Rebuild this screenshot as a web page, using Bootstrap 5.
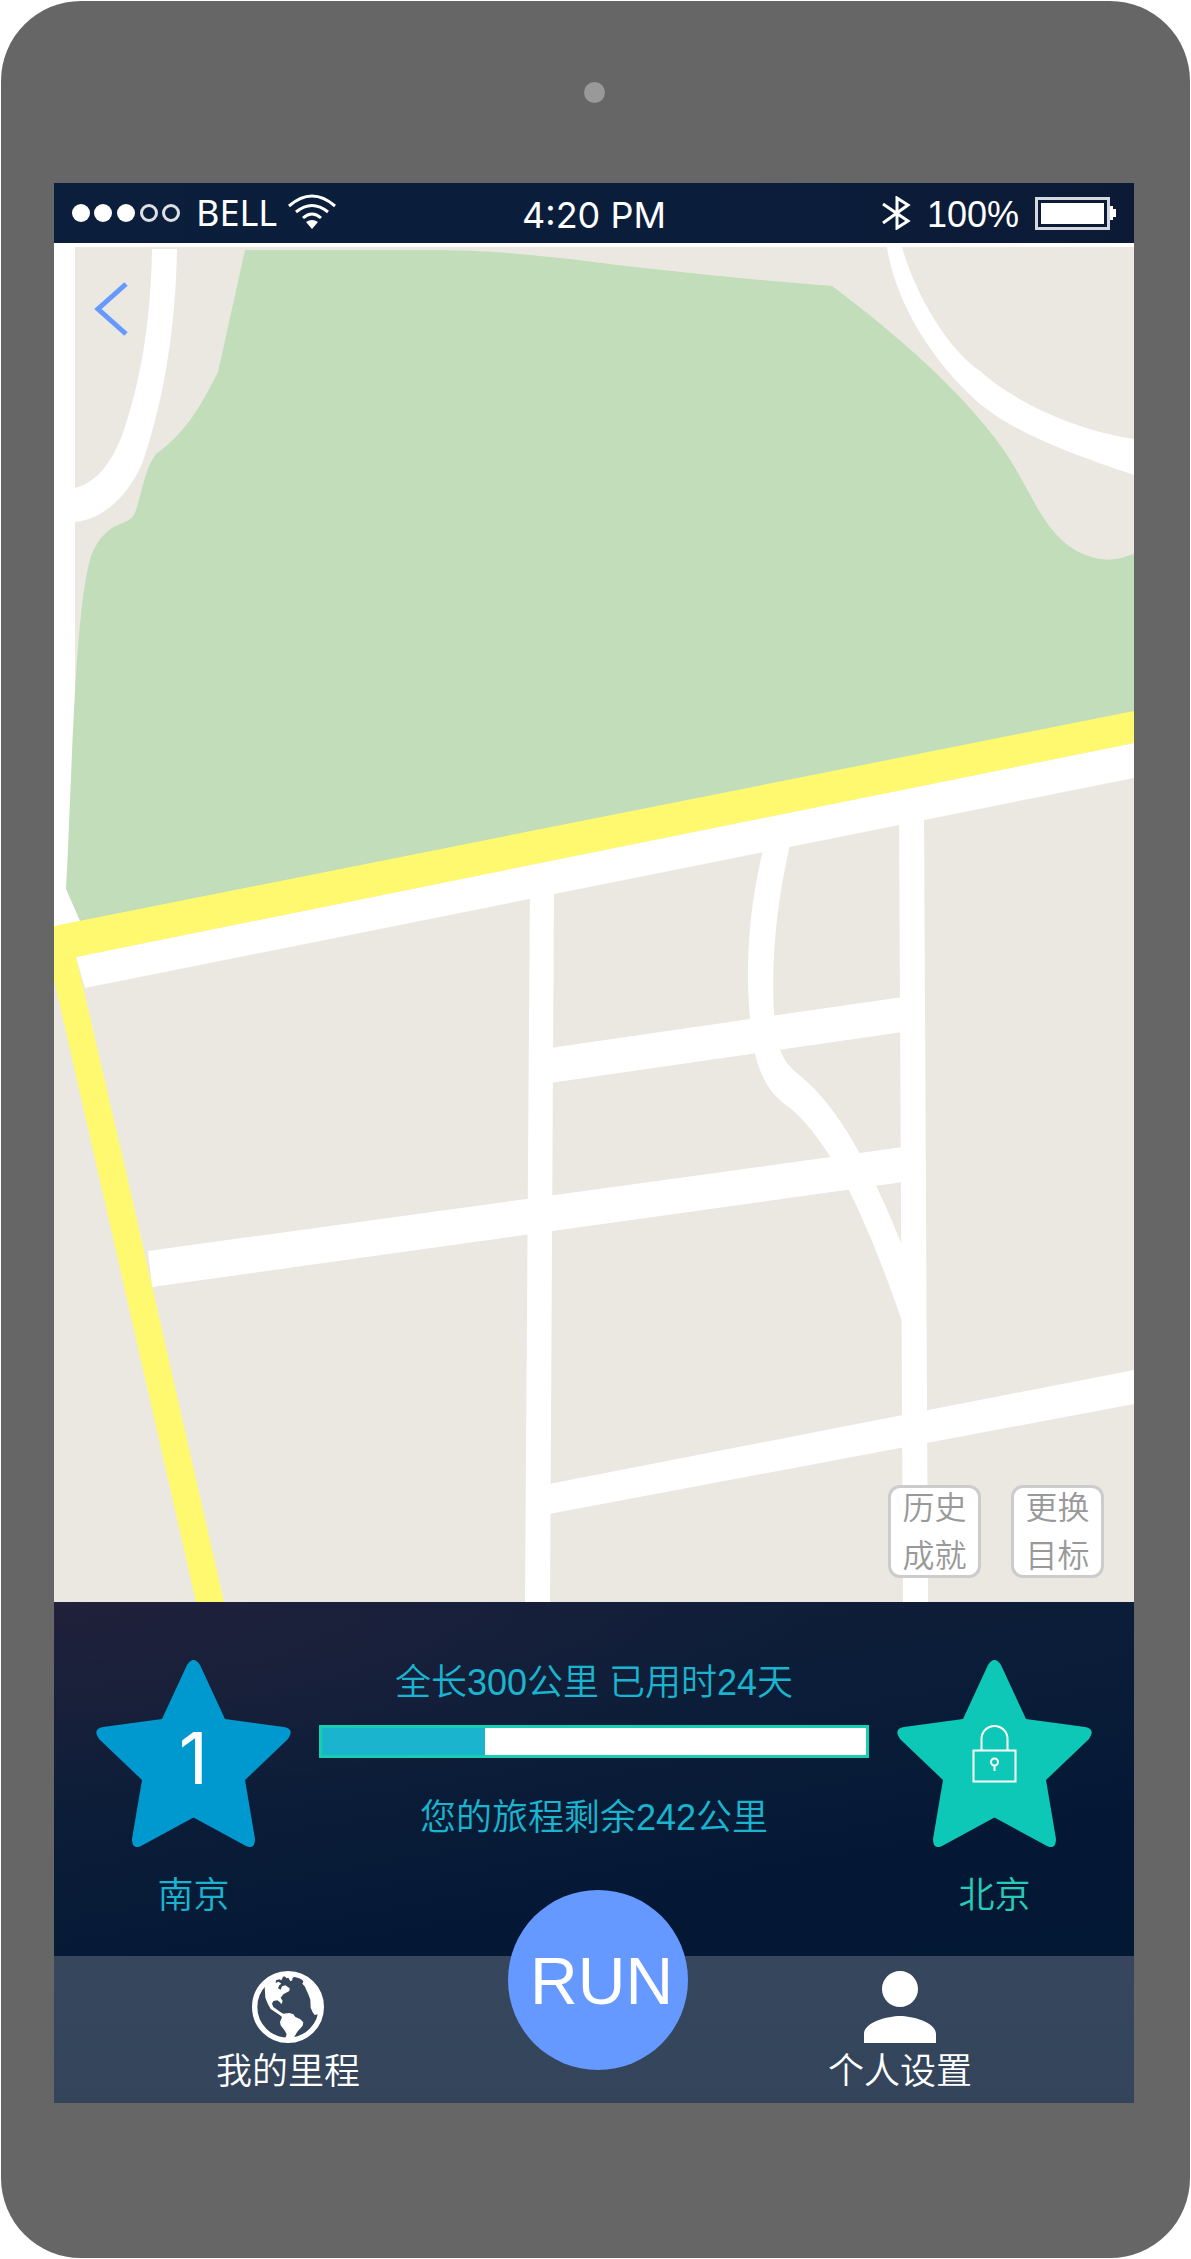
<!DOCTYPE html>
<html lang="zh-CN">
<head>
<meta charset="utf-8">
<meta name="viewport" content="width=device-width, initial-scale=1">
<title>RUN</title>
<link href="https://cdn.jsdelivr.net/npm/bootstrap@5.3.0/dist/css/bootstrap.min.css" rel="stylesheet">
<style>
  body { background: #fff; font-family: "Liberation Sans", "Noto Sans CJK SC", sans-serif; font-weight: 350; }
  .phone { margin: 1px; padding: 0 56px 155px 53px; background: #666; border-radius: 80px; }
  .phone-top { height: 182px; }
  .camera { width: 21px; height: 21px; background: #999; }
  .screen { background: #04193a; }
  .status { height: 60px; padding: 0 18px; background: linear-gradient(90deg, #0b1f3c, #0a1d3b 60%, #0c1a35); color: #fff; font-size: 36px; line-height: 56px; font-weight: 400; }
  .status-text { padding-top: 4px; }
  .carrier { font-family: "Noto Sans", sans-serif; }
  .clock { font-family: Inter, sans-serif; }
  .map-btn { width: 93px; height: 93px; padding: 0; border: 3px solid #ccc; border-radius: 12px; background: #fff; color: #999; font-size: 32px; line-height: 48px; font-weight: 350; }
  .map-tools { right: 30px; bottom: 24px; gap: 30px; }
  .back { left: 30px; top: 30px; padding: 8px; line-height: 0; }
  .trip { padding: 0 42px 33px; gap: 28px; background: radial-gradient(ellipse 70% 60% at 0 0, #20213b, rgba(32,33,59,0)), linear-gradient(170deg, #141f3a, #0b1d38 40%, #041835 75%, #031833); }
  .trip-text { color: #1ab4cf; font-size: 36px; line-height: 54px; }
  .trip-mid { padding-top: 54px; }
  .city { padding-top: 58px; width: 195px; }
  .city-name { margin-top: 22px; font-size: 36px; line-height: 54px; color: #1ab4cf; }
  .goal .city-name { color: #25cdb9; }
  .star-num { font-family: Inter, sans-serif; font-size: 72px; line-height: 72px; font-weight: 400; color: #fff; padding-top: 8px; }
  .trip-bar { height: 33px; margin: 15px 0 33px; border: 3px solid #16cfb2; border-radius: 0; background: #fff; }
  .trip-bar .progress-bar { background: #1ab4cf; }
  .tabs { padding: 15px 15% 4px; background: linear-gradient(#37465d, #34465c 60%, #34445b); }
  .tab-link { width: 144px; color: #fff; font-size: 36px; line-height: 54px; text-decoration: none; white-space: nowrap; }
  .tab-link svg { margin-bottom: 2px; }
  .run-btn { left: 42%; bottom: 33px; width: 180px; height: 180px; border: 0; padding: 2px 0 0 8px; background: #69f; color: #fff; font-size: 66px; line-height: 72px; font-weight: 400; }
</style>
<script src="https://cdn.jsdelivr.net/npm/bootstrap@5.3.0/dist/js/bootstrap.bundle.min.js"></script>
</head>
<body>
<div class="phone">
  <div class="phone-top d-flex align-items-center justify-content-center"><span class="camera rounded-circle"></span></div>
  <main class="screen">
    <header class="status d-flex align-items-center">
      <div class="d-flex align-items-center flex-fill w-25">
        <svg width="108" height="18" viewBox="0 0 108 18" aria-hidden="true">
          <g fill="#fff"><circle cx="9" cy="9" r="9"/><circle cx="31" cy="9" r="9"/><circle cx="54" cy="9" r="9"/></g>
          <g fill="none" stroke="#dde0e5" stroke-width="3"><circle cx="77" cy="9" r="7.500"/><circle cx="99" cy="9" r="7.500"/></g>
        </svg>
        <span class="carrier ms-3">BELL</span>
        <svg class="ms-2" width="52" height="38" viewBox="-3 0 52 38" fill="none" stroke="#fff" stroke-width="3" aria-hidden="true">
          <path d="M1 12Q24 -8 47 12"/><path d="M8 18Q24 5 40 18"/><path d="M15 24Q24 16 33 24"/><path d="M24 35l-6-7q6-4 12 0z" fill="#fff" stroke="none"/>
        </svg>
      </div>
      <div class="clock status-text">4:20 PM</div>
      <div class="d-flex align-items-center justify-content-end flex-fill w-25">
        <svg width="30" height="34" viewBox="0 0 30 34" fill="none" stroke="#fff" stroke-width="3" aria-hidden="true"><path d="M2 8L27 25 16 32V2L27 9 2 27"/></svg>
        <span class="status-text mx-3">100%</span>
        <svg width="81" height="33" viewBox="0 0 81 33" aria-hidden="true"><rect x="1.500" y="1.500" width="72" height="30" fill="none" stroke="#d5d8df" stroke-width="3"/><path d="M6 6h63v21H6zM75 9h3v3h3v8h-3v3h-3z" fill="#fff"/></svg>
      </div>
    </header>

    <section class="position-relative" aria-label="地图">
      <svg class="d-block w-100 h-auto" viewBox="54 243 1080 1359" aria-hidden="true">
        <path fill="#fff" d="M54 243h1080v1359H54z"/>
        <path fill="#ebe8e1" d="M75 247H1134V1602H54V940H75z"/>
        <path fill="#fff" d="M152 249H177C176 310 168 390 142 464C125 502 98 520 75 522V488C99 482 114 458 124 430C144 370 151 310 152 249z"/>
        <path fill="#fff" d="M887 247H902C914 290 945 347 980 371C1018 405 1080 431 1134 439V475C1090 460 1022 438 980 404C930 360 895 300 887 247z"/>
        <path fill="#c1ddba" d="M245 250H440C500 251 530 255 570 259C620 266 760 281 832 286C878 320 958 385 1003 449C1035 495 1045 545 1095 558C1110 562 1122 558 1134 554V720L80 930L66 889L68 850C74 700 78 600 91 556C96 545 98 540 107 532C117 522 130 524 135 513C142 494 144 470 156 454C185 433 200 408 218 372z"/>
        <path fill="#fff" d="M54 880L66 889L80 921L54 930z"/>
        <g fill="#fff">
          <path d="M76 957L1134 743V778L85 988z"/>
          <path d="M530 880H554L550 1602H525z"/>
          <path d="M899 810H924L928 1602H903z"/>
          <path d="M550 1048L903 997V1032L550 1083z"/>
          <path d="M148 1251L903 1147V1182L152 1287z"/>
          <path d="M549 1484L1134 1370V1404L549 1514z"/>
          <path d="M764 845C752 896 744 950 750 1019C754 1062 762 1087 786 1105C830 1138 866 1217 902 1321L904 1250C872 1170 840 1107 797 1073C780 1060 776 1040 774 1016C771 960 776 905 791 840z"/>
        </g>
        <path fill="#fff970" d="M54 926L1134 711V743L76 957L121 1150L224 1602H196L93 1150L54 980z"/>
      </svg>
      <a class="back position-absolute" href="#" aria-label="返回"><svg width="36" height="56" viewBox="0 0 36 56" fill="none" stroke="#69f" stroke-width="5"><path d="M34 3L6 28 34 53"/></svg></a>
      <div class="map-tools position-absolute d-flex">
        <button type="button" class="map-btn d-flex align-items-center justify-content-center"><span>历史<br>成就</span></button>
        <button type="button" class="map-btn d-flex align-items-center justify-content-center"><span>更换<br>目标</span></button>
      </div>
    </section>

    <section class="trip d-flex align-items-start text-center">
      <div class="city flex-shrink-0">
        <div class="position-relative">
          <svg class="d-block" width="195" height="187" viewBox="0 0 195 187" aria-hidden="true"><path fill="#0099cf" d="M91 5Q97.500 -5 104 5L129 59L188 67Q199 69 192 79L149 120L159 179Q159 190 150 186L97.500 157.500L45 186Q36 190 36 179L46 120L3 79Q-4 69 7 67L66 59z"/></svg>
          <span class="star-num position-absolute top-0 start-0 w-100 h-100 d-flex align-items-center justify-content-center">1</span>
        </div>
        <div class="city-name">南京</div>
      </div>
      <div class="trip-mid flex-fill">
        <div class="trip-text">全长300公里 已用时24天</div>
        <div class="progress trip-bar" role="progressbar" aria-label="旅程进度" aria-valuenow="58" aria-valuemin="0" aria-valuemax="300"><div class="progress-bar" style="width:30%"></div></div>
        <div class="trip-text">您的旅程剩余242公里</div>
      </div>
      <div class="city goal flex-shrink-0">
        <svg class="d-block" width="195" height="187" viewBox="0 0 195 187" aria-hidden="true">
          <path fill="#0dc8b7" d="M91 5Q97.500 -5 104 5L129 59L188 67Q199 69 192 79L149 120L159 179Q159 190 150 186L97.500 157.500L45 186Q36 190 36 179L46 120L3 79Q-4 69 7 67L66 59z"/>
          <g fill="none" stroke="#fff" stroke-width="2"><path d="M76.500 90.500h42v31h-42zM84.500 90V79a13 13 0 0 1 26 0V90"/><circle cx="97.500" cy="102" r="3.500"/><path d="M97.500 105v6"/></g>
        </svg>
        <div class="city-name">北京</div>
      </div>
    </section>

    <nav class="tabs position-relative d-flex justify-content-between text-center">
      <a class="tab-link d-flex flex-column align-items-center" href="#">
        <svg width="72" height="72" viewBox="36 32 216 216" fill="#fff" aria-hidden="true">
          <circle cx="144" cy="140" r="100" fill="none" stroke="#fff" stroke-width="16"/>
          <path d="M74 78L76 112 84 132 92 146 120 165 126 170 120 185 122 195 135 212 140 222 134 238H158L172 214 188 196 190 186 180 176 166 170 160 162 148 158 130 160 122 156 100 140 96 130 100 122 112 120 120 126 124 132 128 122 122 112 130 102 148 92 149 84 136 75 126 78 122 88 114 84 118 75 124 70 116 64 107 68 108 60 118 57 124 60 130 48 110 48z"/>
          <path d="M134 46L139 54 145 52 151 63 157 60 157 54 165 48z"/>
          <path d="M186 56L190 64 187 70 194 78 205 102 211 118 212 142 218 156 224 164 236 162 246 140 235 90 210 60z"/>
        </svg>
        我的里程
      </a>
      <button type="button" class="run-btn position-absolute rounded-circle">RUN</button>
      <a class="tab-link d-flex flex-column align-items-center" href="#">
        <svg width="72" height="72" viewBox="4 4 16 16" fill="#fff" aria-hidden="true"><path d="M12 12c2.210 0 4-1.790 4-4s-1.790-4-4-4-4 1.790-4 4 1.790 4 4 4zm0 2c-2.670 0-8 1.340-8 4v2h16v-2c0-2.660-5.330-4-8-4z"/></svg>
        个人设置
      </a>
    </nav>
  </main>
</div>
</body>
</html>
